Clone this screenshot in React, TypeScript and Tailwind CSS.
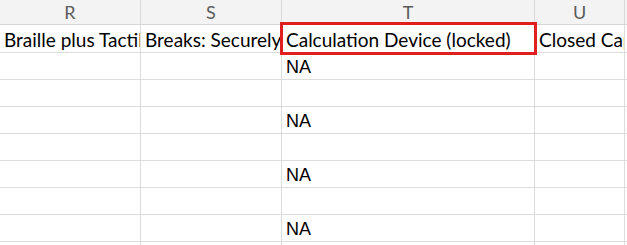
import React from 'react';

const cols = [
  { letter: 'R', width: 'w-[141px]', head: 'Braille plus Tactile Graphics' },
  { letter: 'S', width: 'w-[141px]', head: 'Breaks: Securely Copied' },
  { letter: 'T', width: 'w-[253px]', head: 'Calculation Device (locked)' },
  { letter: 'U', width: 'w-[90px]', head: 'Closed Captioning' },
];

const rows = ['NA', '', 'NA', '', 'NA', '', 'NA', ''];

const App = () => {
  return (
    <div className="relative w-[627px] h-[245px] overflow-hidden bg-white">
      {/* Column letters */}
      <div className="flex h-[25px] bg-[#f3f3f3] border-b border-[#d6d6d6]">
        {cols.map((c) => (
          <div
            key={c.letter}
            className={`${c.width} shrink-0 border-r border-[#d9d9d9] flex items-center justify-center text-[18px] leading-none text-[#5a5a5a] font-['Lato',sans-serif]`}
          >
            {c.letter}
          </div>
        ))}
        <div className="flex-1" />
      </div>

      {/* Header row */}
      <div className="flex h-[28px] border-b border-[#dcdcdc]">
        {cols.map((c) => (
          <div
            key={c.letter}
            className={`${c.width} shrink-0 border-r border-[#dcdcdc] overflow-hidden whitespace-nowrap flex items-center pl-[4px] pt-[1px] text-[19px] leading-none text-black font-['Lato',sans-serif]`}
          >
            {c.head}
          </div>
        ))}
        <div className="flex-1" />
      </div>

      {/* Data rows */}
      {rows.map((v, i) => (
        <div key={i} className="flex h-[27px] border-b border-[#dcdcdc]">
          {cols.map((c) => (
            <div
              key={c.letter}
              className={`${c.width} shrink-0 border-r border-[#dcdcdc] overflow-hidden whitespace-nowrap flex items-end pb-[3px] pl-[4px] text-[18px] leading-none text-black font-['Liberation_Sans',Arial,sans-serif]`}
            >
              {c.letter === 'T' ? v : ''}
            </div>
          ))}
          <div className="flex-1" />
        </div>
      ))}

      {/* Selected cell outline */}
      <div className="absolute left-[280px] top-[22px] w-[257px] h-[33px] border-[3px] border-[#e0201f]" />
    </div>
  );
};

export default App;
